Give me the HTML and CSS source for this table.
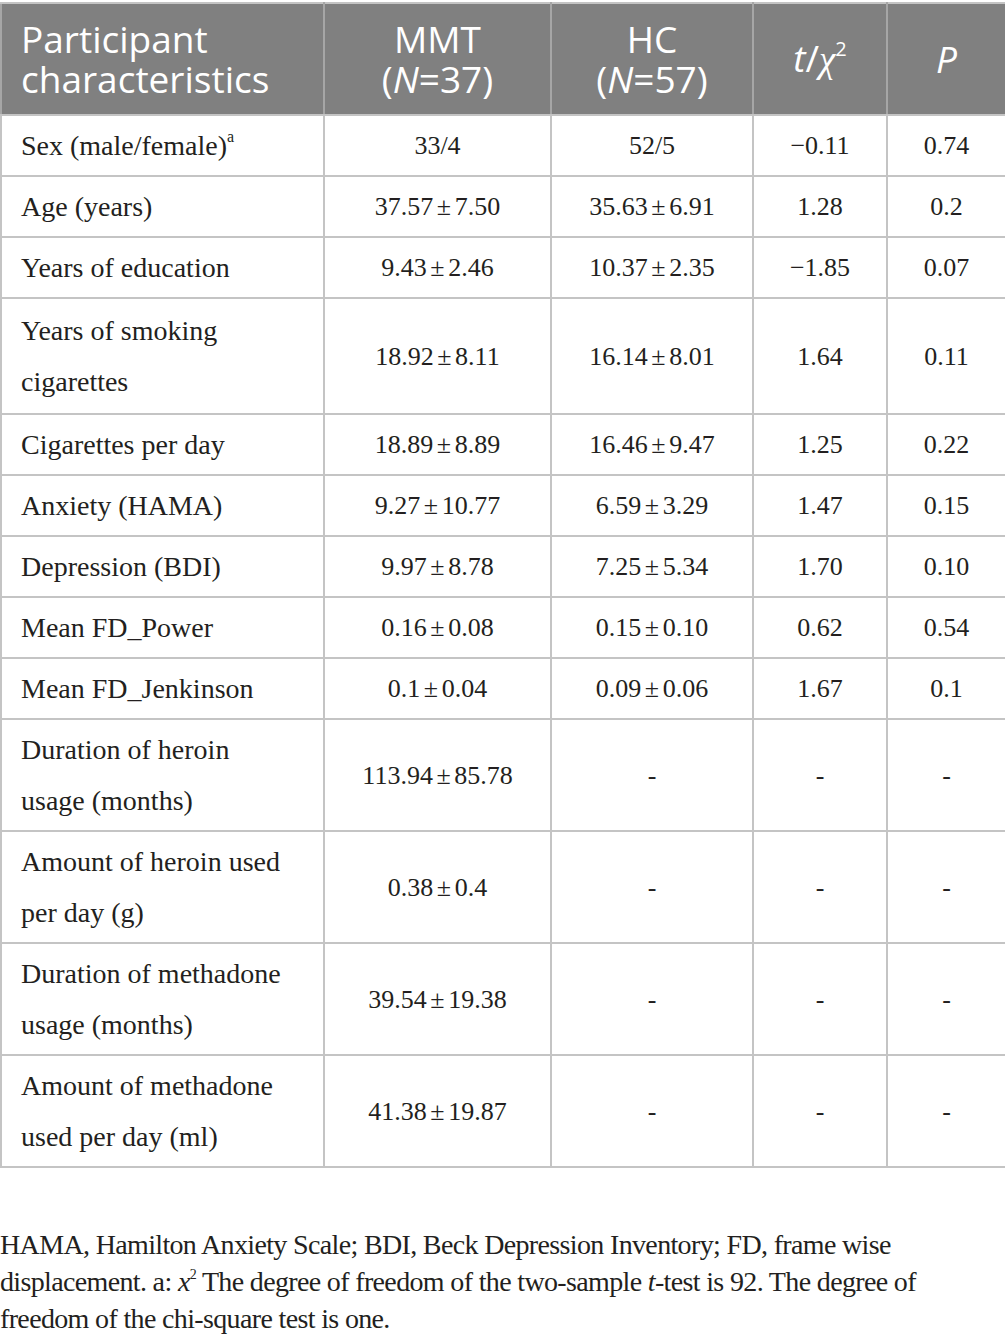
FILE: index.html
```html
<!DOCTYPE html>
<html lang="en">
<head>
	<meta charset="UTF-8">
	<title>Participant characteristics</title>
	<link rel="stylesheet" href="styles.css">
</head>
<body>
	<div class="wrap">
		<table class="data">
			<colgroup>
				<col class="c1"><col class="c2"><col class="c3"><col class="c4"><col class="c5">
			</colgroup>
			<thead>
				<tr>
					<th class="first">Participant characteristics</th>
					<th>MMT<br>(<i>N</i>=37)</th>
					<th>HC<br>(<i>N</i>=57)</th>
					<th><i>t</i>/<i class="chi">χ</i><sup>2</sup></th>
					<th><i>P</i></th>
				</tr>
			</thead>
			<tbody>
				<tr><td class="first">Sex (male/female)<sup>a</sup></td><td>33/4</td><td>52/5</td><td>−0.11</td><td>0.74</td></tr>
				<tr><td class="first">Age (years)</td><td>37.57 ± 7.50</td><td>35.63 ± 6.91</td><td>1.28</td><td>0.2</td></tr>
				<tr><td class="first">Years of education</td><td>9.43 ± 2.46</td><td>10.37 ± 2.35</td><td>−1.85</td><td>0.07</td></tr>
				<tr class="wide"><td class="first">Years of smoking cigarettes</td><td>18.92 ± 8.11</td><td>16.14 ± 8.01</td><td>1.64</td><td>0.11</td></tr>
				<tr><td class="first">Cigarettes per day</td><td>18.89 ± 8.89</td><td>16.46 ± 9.47</td><td>1.25</td><td>0.22</td></tr>
				<tr><td class="first">Anxiety (HAMA)</td><td>9.27 ± 10.77</td><td>6.59 ± 3.29</td><td>1.47</td><td>0.15</td></tr>
				<tr><td class="first">Depression (BDI)</td><td>9.97 ± 8.78</td><td>7.25 ± 5.34</td><td>1.70</td><td>0.10</td></tr>
				<tr><td class="first">Mean FD_Power</td><td>0.16 ± 0.08</td><td>0.15 ± 0.10</td><td>0.62</td><td>0.54</td></tr>
				<tr><td class="first">Mean FD_Jenkinson</td><td>0.1 ± 0.04</td><td>0.09 ± 0.06</td><td>1.67</td><td>0.1</td></tr>
				<tr><td class="first">Duration of heroin usage (months)</td><td>113.94 ± 85.78</td><td>-</td><td>-</td><td>-</td></tr>
				<tr><td class="first">Amount of heroin used per day (g)</td><td>0.38 ± 0.4</td><td>-</td><td>-</td><td>-</td></tr>
				<tr><td class="first">Duration of methadone usage (months)</td><td>39.54 ± 19.38</td><td>-</td><td>-</td><td>-</td></tr>
				<tr><td class="first">Amount of methadone used per day (ml)</td><td>41.38 ± 19.87</td><td>-</td><td>-</td><td>-</td></tr>
			</tbody>
		</table>
		<p class="note">HAMA, Hamilton Anxiety Scale; BDI, Beck Depression Inventory; FD, frame wise displacement. a: <i>x</i><sup>2</sup> The degree of freedom of the two-sample <i>t</i>-test is 92. The degree of freedom of the chi-square test is one.</p>
	</div>
</body>
</html>
```

FILE: styles.css
```css
body,div,p,table{
	margin:0;
	padding:0;
}
body{
	background:#fff;
	color:#231f20;
	font:26px/51px "Liberation Serif", serif;
}
.wrap{
	width:1005px;
	padding-top:2px;
}
.data{
	width:1005px;
	border-collapse:collapse;
	table-layout:fixed;
}
.data .c1{ width:323px; }
.data .c2{ width:227px; }
.data .c3{ width:202px; }
.data .c4{ width:134px; }
.data .c5{ width:119px; }
.data th,
.data td{
	box-sizing:border-box;
	border:2px solid #c4c4c4;
	text-align:center;
	vertical-align:middle;
}
.data th{
	background:#808080;
	color:#fff;
	font:400 37px/40px "Open Sans", sans-serif;
	padding:15px 0 15px;
	border-color:#c4c4c4 #a6a6a6;
}
.data th sup{
	font-size:20px;
	line-height:0;
	vertical-align:16px;
}
.data th .chi{
	font-family:"Liberation Serif", serif;
}
.data td{
	padding:4px 0 4px;
	word-spacing:-3px;
}
.data .wide td{
	padding-top:6px;
	padding-bottom:6px;
}
.data .first{
	text-align:left;
	padding-left:19px;
	padding-right:34px;
	word-spacing:0;
}
.data td.first{
	font-size:28px;
}
.data td sup{
	font-size:16px;
	line-height:0;
	vertical-align:13px;
}
.note{
	margin-top:58px;
	width:945px;
	font:28px/37px "Liberation Serif", serif;
	letter-spacing:-0.65px;
	color:#231f20;
}
.note sup{
	font-size:14px;
	line-height:0;
	vertical-align:12px;
}
```
